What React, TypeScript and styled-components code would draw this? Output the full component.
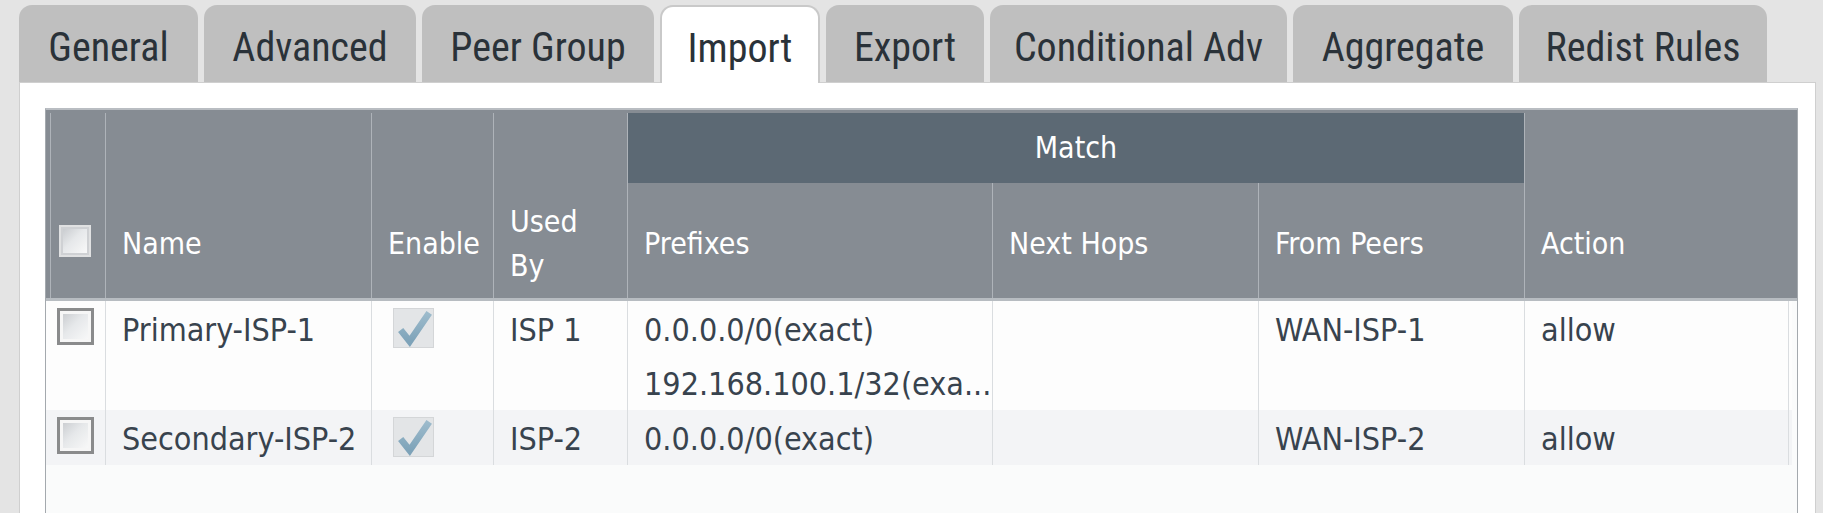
import React from "react";
import styled, { createGlobalStyle, css } from "styled-components";

const GlobalStyle = createGlobalStyle`
  html, body {
    margin: 0;
    padding: 0;
    height: 100%;
    overflow: hidden;
    background: #e4e4e4;
  }
  #root { height: 100%; }
  *, *::before, *::after { box-sizing: border-box; }
`;

const COLS = "59px 266px 122px 134px 365px 266px 266px";

const Page = styled.div`
  height: 100%;
  display: flex;
  flex-direction: column;
  padding: 5px 7px 0 19px;
  background: #e4e4e4;
`;

const TabBar = styled.div`
  display: flex;
  align-items: flex-end;
  gap: 6px;
  height: 77px;
`;

const Tab = styled.div<{ $w: number; $active?: boolean }>`
  flex: none;
  width: ${(p) => p.$w}px;
  height: 77px;
  display: flex;
  align-items: center;
  justify-content: center;
  padding-top: 7px;
  border-radius: 13px 13px 0 0;
  background: #bfbfbf;
  font-family: "Liberation Sans Narrow", "Roboto Condensed", "DejaVu Sans Condensed", "Liberation Sans", sans-serif;
  font-size: 40px;
  color: #2a3239;
  white-space: nowrap;
  ${(p) =>
    p.$active &&
    css`
      position: relative;
      z-index: 1;
      height: 78px;
      margin-bottom: -1px;
      background: #ffffff;
      border: 2px solid #c9c9c9;
      border-bottom: none;
    `}
`;

const Panel = styled.div`
  flex: 1;
  min-height: 0;
  display: flex;
  flex-direction: column;
  background: #ffffff;
  border: 1px solid #cfcfcf;
  border-bottom: none;
  padding: 25px 17px 0 25px;
`;

const Table = styled.div`
  flex: 1;
  display: flex;
  flex-direction: column;
  background: #fafbfb;
  border-left: 1px solid #a4a9ae;
  border-right: 1px solid #a4a9ae;
  border-top: 2px solid #b9bdc2;
  font-family: "DejaVu Sans Condensed", "DejaVu Sans", "Noto Sans", sans-serif;
  font-size: 30px;
`;

const Header = styled.div`
  display: grid;
  grid-template-columns: ${COLS} 1fr;
  grid-template-rows: 70px 115px;
  padding-top: 3px;
  background: #868c93;
  border-bottom: 3px solid #b7bcc1;
  color: #ffffff;
`;

const HeadCell = styled.div<{ $lower?: boolean; $col?: number }>`
  grid-row: ${(p) => (p.$lower ? "2" : "1 / span 2")};
  ${(p) => p.$col && `grid-column: ${p.$col};`}
  display: flex;
  align-items: center;
  padding: ${(p) => (p.$lower ? "6px" : "76px")} 8px 0 16px;
  border-left: 1px solid #aeb3b9;
  line-height: 44px;
  white-space: nowrap;
`;

const HeadSelectCell = styled.div`
  grid-row: 1 / span 2;
  display: flex;
  align-items: center;
  padding: 70px 0 0 13px;
  box-shadow: inset 4px 0 0 #868c93, inset 5px 0 0 #aeb3b9;
`;

const GroupCell = styled.div<{ $span: number }>`
  grid-row: 1;
  grid-column: span ${(p) => p.$span};
  display: flex;
  align-items: center;
  justify-content: center;
  background: #5c6974;
  border-left: 1px solid #aeb3b9;
  line-height: 44px;
`;

const Body = styled.div`
  display: flex;
  flex-direction: column;
  margin-right: 5px;
`;

const Row = styled.div<{ $alt?: boolean }>`
  display: grid;
  grid-template-columns: ${COLS} 265px;
  background: ${(p) => (p.$alt ? "#f3f4f6" : "#fdfdfd")};
  color: #38434e;
  font-size: 32px;
`;

const Cell = styled.div<{ $last?: boolean }>`
  display: flex;
  flex-direction: column;
  gap: 10px;
  padding: 7px 0 4px 16px;
  border-left: 1px solid #dadde0;
  ${(p) => p.$last && "border-right: 1px solid #dadde0;"}
  line-height: 44px;
  white-space: nowrap;
  overflow: hidden;
`;

const SelectCell = styled.div`
  padding: 7px 0 0 11px;
`;

const EnableCell = styled.div`
  padding: 7px 0 0 21px;
  border-left: 1px solid #dadde0;
`;

const Checkbox = styled.div<{ $head?: boolean }>`
  width: ${(p) => (p.$head ? 32 : 37)}px;
  height: ${(p) => (p.$head ? 32 : 37)}px;
  border: ${(p) => (p.$head ? "2px solid #e0e1e2" : "3px solid #8a8b8c")};
  box-shadow: inset 0 0 0 ${(p) => (p.$head ? "2px #cfd1d4" : "3px #f6f6f6")};
  background: linear-gradient(135deg, #c4c7cb 0%, #e6e8ea 45%, #fbfbfb 100%);
`;

const EnableBox = styled.div`
  width: 41px;
  height: 40px;
  background: #e3e5e7;
  border: 1px solid #d4d6d8;
  display: flex;
`;

const CheckMark = () => (
  <svg width="41" height="40" viewBox="0 0 41 40" fill="none">
    <defs>
      <linearGradient id="chk" x1="0" y1="0" x2="0" y2="1">
        <stop offset="0" stopColor="#9dbbcc" />
        <stop offset="1" stopColor="#7ea3b9" />
      </linearGradient>
    </defs>
    <path d="M7 21 L16.5 33 L37 3" stroke="url(#chk)" strokeWidth="7" strokeLinejoin="miter" />
  </svg>
);

type Rule = {
  name: string;
  usedBy: string;
  prefixes: string[];
  nextHops: string;
  fromPeers: string;
  action: string;
};

const rules: Rule[] = [
  {
    name: "Primary-ISP-1",
    usedBy: "ISP 1",
    prefixes: ["0.0.0.0/0(exact)", "192.168.100.1/32(exa..."],
    nextHops: "",
    fromPeers: "WAN-ISP-1",
    action: "allow",
  },
  {
    name: "Secondary-ISP-2",
    usedBy: "ISP-2",
    prefixes: ["0.0.0.0/0(exact)"],
    nextHops: "",
    fromPeers: "WAN-ISP-2",
    action: "allow",
  },
];

const tabs: { label: string; w: number; active?: boolean }[] = [
  { label: "General", w: 179 },
  { label: "Advanced", w: 212 },
  { label: "Peer Group", w: 232 },
  { label: "Import", w: 160, active: true },
  { label: "Export", w: 158 },
  { label: "Conditional Adv", w: 297 },
  { label: "Aggregate", w: 220 },
  { label: "Redist Rules", w: 248 },
];

export default function App() {
  return (
    <>
      <GlobalStyle />
      <Page>
        <TabBar>
          {tabs.map((t) => (
            <Tab key={t.label} $w={t.w} $active={t.active}>
              {t.label}
            </Tab>
          ))}
        </TabBar>
        <Panel>
          <Table>
            <Header>
              <HeadSelectCell>
                <Checkbox $head />
              </HeadSelectCell>
              <HeadCell>Name</HeadCell>
              <HeadCell>Enable</HeadCell>
              <HeadCell>
                <span>
                  Used
                  <br />
                  By
                </span>
              </HeadCell>
              <GroupCell $span={3}>Match</GroupCell>
              <HeadCell $col={8}>Action</HeadCell>
              <HeadCell $lower $col={5}>Prefixes</HeadCell>
              <HeadCell $lower $col={6}>Next Hops</HeadCell>
              <HeadCell $lower $col={7}>From Peers</HeadCell>
            </Header>
            <Body>
              {rules.map((r, i) => (
                <Row key={r.name} $alt={i % 2 === 1}>
                  <SelectCell>
                    <Checkbox />
                  </SelectCell>
                  <Cell>{r.name}</Cell>
                  <EnableCell>
                    <EnableBox>
                      <CheckMark />
                    </EnableBox>
                  </EnableCell>
                  <Cell>{r.usedBy}</Cell>
                  <Cell>
                    {r.prefixes.map((p) => (
                      <span key={p}>{p}</span>
                    ))}
                  </Cell>
                  <Cell>{r.nextHops}</Cell>
                  <Cell>{r.fromPeers}</Cell>
                  <Cell $last>{r.action}</Cell>
                </Row>
              ))}
            </Body>
          </Table>
        </Panel>
      </Page>
    </>
  );
}
